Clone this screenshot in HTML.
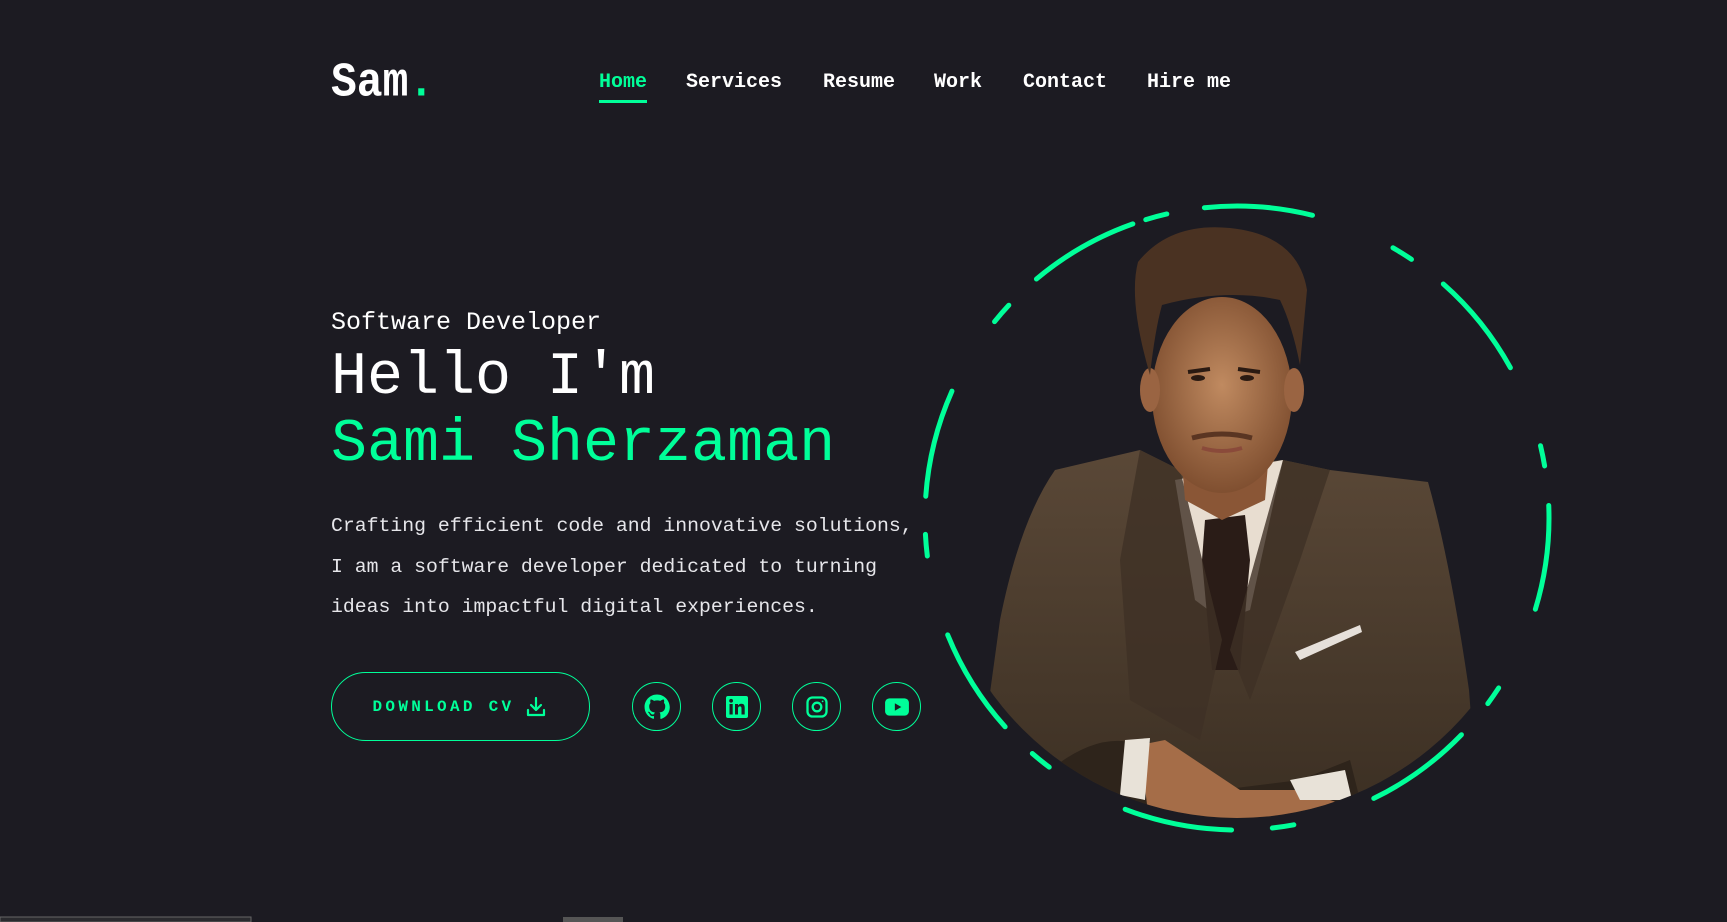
<!DOCTYPE html>
<html><head><meta charset="utf-8"><style>
html,body{margin:0;padding:0;background:#1c1b22;width:1727px;height:922px;overflow:hidden;font-family:"Liberation Mono",monospace;color:#fff}
.abs{position:absolute;white-space:nowrap}
.nav{font-size:20px;font-weight:bold;top:71px}
.soc{position:absolute;top:682px;width:49px;height:49px;border:1.5px solid #00ff99;border-radius:50%;box-sizing:border-box;display:flex;align-items:center;justify-content:center}
</style></head><body>
<div class="abs" style="left:331px;top:55px;font-size:43px;font-weight:bold;transform:scaleY(1.12);transform-origin:top left">Sam<span style="color:#00ff99">.</span></div>
<div class="abs nav" style="left:599px;color:#00ff99">Home</div>
<div class="abs" style="left:599px;top:100px;width:48px;height:3px;background:#00ff99"></div>
<div class="abs nav" style="left:686px">Services</div>
<div class="abs nav" style="left:823px">Resume</div>
<div class="abs nav" style="left:934px">Work</div>
<div class="abs nav" style="left:1023px">Contact</div>
<div class="abs nav" style="left:1147px">Hire me</div>

<div class="abs" style="left:331px;top:308px;font-size:25px">Software Developer</div>
<div class="abs" style="left:331px;top:342px;font-size:60px;line-height:72px">Hello I'm</div>
<div class="abs" style="left:331px;top:409px;font-size:60px;line-height:72px;color:#00ff99">Sami Sherzaman</div>
<div class="abs" style="left:331px;top:506px;font-size:19.8px;line-height:40.5px;color:#e6e6ea">Crafting efficient code and innovative solutions,<br>I am a software developer dedicated to turning<br>ideas into impactful digital experiences.</div>

<div class="abs" style="left:331px;top:672px;width:259px;height:69px;border:1.5px solid #00ff99;border-radius:35px;box-sizing:border-box;display:flex;align-items:center;justify-content:center;color:#00ff99;font-weight:bold;font-size:16px;letter-spacing:3.3px">DOWNLOAD CV<svg width="24" height="24" viewBox="0 0 24 24" style="margin-left:10px" fill="none" stroke="#00ff99" stroke-width="2.2" stroke-linecap="round" stroke-linejoin="round"><path d="M12 3v12M7 10l5 5 5-5M4 15v5h16v-5"/></svg></div>

<div class="soc" style="left:632px"><svg width="26" height="26" viewBox="0 0 24 24" fill="#00ff99"><path d="M12 .5C5.6.5.5 5.6.5 12c0 5.1 3.3 9.4 7.9 10.9.6.1.8-.3.8-.6v-2c-3.2.7-3.9-1.5-3.9-1.5-.5-1.3-1.3-1.7-1.300-1.7-1-.7.1-.7.1-.7 1.2.1 1.8 1.2 1.8 1.2 1 1.8 2.8 1.3 3.5 1 .1-.8.4-1.3.7-1.6-2.6-.3-5.3-1.3-5.3-5.7 0-1.3.5-2.3 1.2-3.1-.1-.3-.5-1.5.1-3.1 0 0 1-.3 3.2 1.2a11 11 0 015.8 0c2.2-1.5 3.2-1.2 3.2-1.2.6 1.6.2 2.8.1 3.1.8.8 1.2 1.8 1.2 3.1 0 4.4-2.7 5.4-5.3 5.7.4.4.8 1.1.8 2.2v3.2c0 .3.2.7.8.6 4.6-1.5 7.9-5.8 7.9-10.9C23.5 5.6 18.4.5 12 .5z"/></svg></div>
<div class="soc" style="left:712px"><svg width="24" height="24" viewBox="0 0 24 24"><rect x="1" y="1" width="22" height="22" rx="2" fill="#00ff99"/><rect x="4.5" y="9" width="3.2" height="10.5" fill="#1c1b22"/><circle cx="6.1" cy="5.8" r="1.9" fill="#1c1b22"/><path d="M10 9h3v1.5c.6-1 1.8-1.8 3.4-1.8 2.6 0 3.3 1.7 3.3 4.2v6.6h-3.2v-5.8c0-1.3-.3-2.3-1.6-2.3s-1.9 1-1.9 2.3v5.8H10z" fill="#1c1b22"/></svg></div>
<div class="soc" style="left:792px"><svg width="24" height="24" viewBox="0 0 24 24" fill="none" stroke="#00ff99" stroke-width="2.3"><rect x="2.5" y="2.5" width="19" height="19" rx="5"/><circle cx="12" cy="12" r="4.3"/><circle cx="17.6" cy="6.4" r=".9" fill="#00ff99" stroke="none"/></svg></div>
<div class="soc" style="left:872px"><svg width="26" height="26" viewBox="0 0 24 24"><rect x="1" y="4" width="22" height="16" rx="4" fill="#00ff99"/><path d="M10 8.5v7l6-3.5z" fill="#1c1b22"/></svg></div>

<svg class="abs" style="left:0;top:0" width="1727" height="922" viewBox="0 0 1727 922">
<defs>
<radialGradient id="face" cx="50%" cy="45%" r="60%"><stop offset="0" stop-color="#c08a60"/><stop offset="1" stop-color="#7a4a2c"/></radialGradient>
<linearGradient id="suit" x1="0" y1="0" x2="0" y2="1"><stop offset="0" stop-color="#5a4837"/><stop offset="1" stop-color="#3a2e22"/></linearGradient>
<clipPath id="cp"><circle cx="1237" cy="515" r="303"/></clipPath>
</defs>
<g clip-path="url(#cp)">
<path d="M1055 470 L1140 450 L1180 470 L1283 460 L1330 470 L1428 482 Q1450 560 1469 690 L1475 770 Q1440 800 1380 830 L1110 830 Q1040 790 989 700 L1000 620 Q1020 520 1055 470z" fill="url(#suit)"/>
<path d="M1175 480 L1283 460 L1250 610 L1222 620 L1195 600z" fill="#e8ddd0"/>
<path d="M1205 520 L1245 515 L1250 560 L1240 670 L1212 670 L1202 560z" fill="#2a1c17"/>
<path d="M1140 450 L1180 470 L1222 640 L1200 740 L1130 700 L1120 560z" fill="#3e3126" opacity=".8"/>
<path d="M1283 460 L1330 470 L1300 560 L1250 700 L1230 650z" fill="#3e3126" opacity=".8"/>
<path d="M1295 652 L1360 625 L1362 632 L1300 660z" fill="#e6e0da"/>
<path d="M1050 770 Q1100 730 1140 745 L1220 790 L1300 780 L1350 760 L1360 800 L1300 830 L1150 830 Q1110 805 1050 790z" fill="#2e241b"/>
<path d="M1140 745 L1165 740 L1240 790 L1300 790 L1345 805 L1330 830 L1150 830z" fill="#a56d48"/>
<path d="M1125 740 L1150 738 L1145 800 L1120 795z" fill="#e8e2d8"/>
<path d="M1290 780 L1345 770 L1352 800 L1300 800z" fill="#e8e2d8"/>
<path d="M1180 440 L1270 440 L1265 500 L1222 520 L1185 500z" fill="#8a5636"/>
<ellipse cx="1222" cy="395" rx="70" ry="98" fill="url(#face)"/>
<ellipse cx="1150" cy="390" rx="10" ry="22" fill="#9a6442"/>
<ellipse cx="1294" cy="390" rx="10" ry="22" fill="#9a6442"/>
<path d="M1150 375 Q1128 300 1138 262 Q1170 222 1230 228 Q1298 235 1307 290 L1300 365 Q1292 325 1280 300 Q1225 288 1162 305 Q1155 330 1150 375z" fill="#4a3222"/>
<path d="M1188 372 l22 -3 M1238 369 l22 3" stroke="#2a1a12" stroke-width="4"/>
<ellipse cx="1198" cy="378" rx="7" ry="3" fill="#2a1a12"/><ellipse cx="1247" cy="378" rx="7" ry="3" fill="#2a1a12"/>
<path d="M1192 438 Q1222 430 1252 438" stroke="#5a3522" stroke-width="5" fill="none"/>
<path d="M1202 448 Q1222 454 1242 448" stroke="#8a4a3a" stroke-width="4" fill="none"/>
</g>
<g id="ring" fill="none" stroke="#00ff99" stroke-width="5" stroke-linecap="round"></g>
<rect x="0" y="917" width="251" height="5" fill="#2a2a2e" stroke="#666" stroke-width="1"/>
<rect x="563" y="917" width="60" height="5" fill="#555"/>
</svg>
<script>
var a=[[-96,-76],[-107,-103],[-130,-109.5],[-141,-137],[-176,-156],[173,177],[138,158],[127,131],[91,111],[79.5,83.5],[44,64],[33,36.5],[-2.3,17],[-13.4,-9.6],[-48.6,-28.8],[-60,-56]];
var cx=1237,cy=518,r=312,g=document.getElementById('ring'),h='';
a.forEach(function(d){var s=d[0]*Math.PI/180,e=d[1]*Math.PI/180;
h+='<path d="M'+(cx+r*Math.cos(s))+' '+(cy+r*Math.sin(s))+' A'+r+' '+r+' 0 0 1 '+(cx+r*Math.cos(e))+' '+(cy+r*Math.sin(e))+'"/>';});
g.innerHTML=h;
</script>
</body></html>
